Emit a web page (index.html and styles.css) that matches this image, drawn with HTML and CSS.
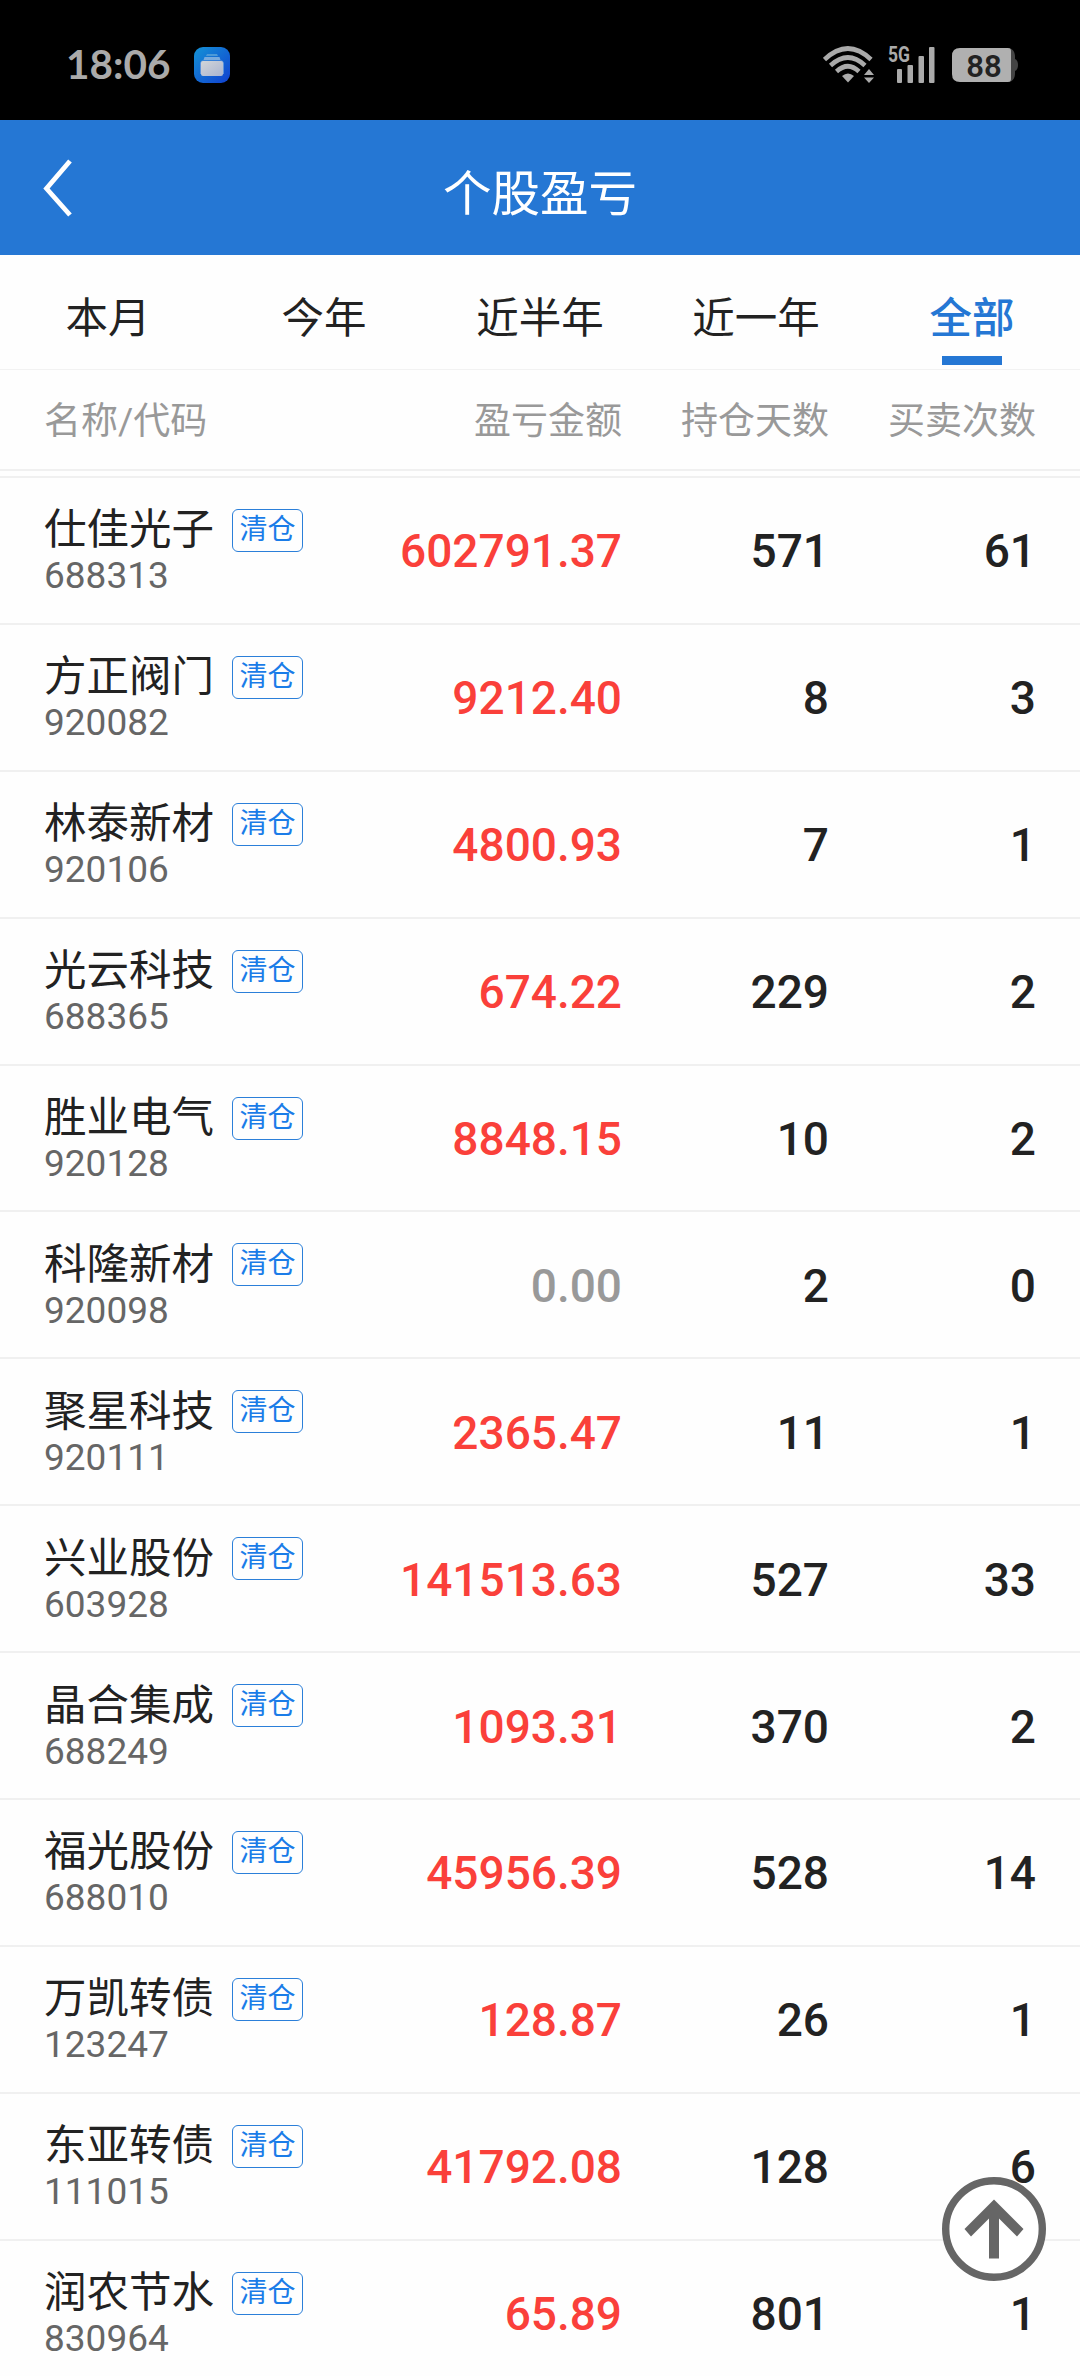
FILE: index.html
```html
<!DOCTYPE html>
<html lang="zh-CN">
<head>
    <meta charset="UTF-8">
    <meta name="viewport" content="width=device-width, initial-scale=1.0">
    <title>个股盈亏</title>
    <link rel="stylesheet" href="styles.css">
</head>
<body>
    <div class="status-bar">
        <span class="time">18:06</span>
        <svg class="app-icon" width="36" height="36" viewBox="0 0 36 36">
            <defs>
                <linearGradient id="appBg" x1="0" y1="0" x2="1" y2="1">
                    <stop offset="0" stop-color="#1593d6"/>
                    <stop offset="1" stop-color="#1040d0"/>
                </linearGradient>
                <linearGradient id="appCard" x1="0" y1="0" x2="1" y2="1">
                    <stop offset="0" stop-color="#d2d5d8"/>
                    <stop offset="1" stop-color="#a9b4d0"/>
                </linearGradient>
            </defs>
            <rect width="36" height="36" rx="9" fill="url(#appBg)"/>
            <path d="M13 7h10l1 2H12z" fill="#4c9ad8"/>
            <path d="M10.500 10h15l1 3h-17z" fill="#78aadd"/>
            <path d="M8 13.500h20l2 2V27H6V15.500z" fill="#5c93dc"/>
            <rect x="7" y="14" width="22" height="15" rx="2" fill="url(#appCard)"/>
        </svg>
        <div class="status-icons">
            <svg class="wifi" width="51" height="38" viewBox="0 0 51 38">
                <g fill="none" stroke="#aaa" stroke-width="4.600">
                    <path d="M1.500 13.500Q25 -8.500 48 13.500"/>
                    <path d="M7.500 19.500Q25 3.500 42 19.500"/>
                    <path d="M13.500 25.500Q25 15 36 25.500"/>
                </g>
                <path d="M19 30Q25 25 31 30L25 36.500z" fill="#aaa"/>
                <path d="M41 29l5-6 5 6zM41 31.500h10l-5 5.500z" fill="#aaa"/>
            </svg>
            <svg class="signal" width="49" height="54" viewBox="0 -8 49 54">
                <text x="1" y="16" textLength="22" lengthAdjust="spacingAndGlyphs">5G</text>
                <rect x="10" y="23" width="5" height="14" rx="1"/>
                <rect x="20.500" y="19" width="5.500" height="18" rx="1"/>
                <rect x="31.500" y="10" width="5.500" height="27" rx="1"/>
                <rect x="42" y="1" width="5.500" height="36" rx="1"/>
            </svg>
            <svg class="battery" width="67" height="46" viewBox="0 -6 67 46">
                <path d="M57 0c4 1 6 4 6 9v2c4 1 4 11 0 12v2c0 5-2 8-6 9z" fill="#444"/>
                <path d="M8 0h48q3 0 3 3v28q0 3-3 3H8q-8 0-8-8V8q0-8 8-8z" fill="#b0b0b0"/>
                <text x="32" y="28.500" text-anchor="middle">88</text>
            </svg>
        </div>
    </div>

    <div class="header">
        <svg class="back" width="30" height="58" viewBox="0 0 30 58">
            <path d="M28 2L4.500 29.500L28 56" fill="none" stroke="#fff" stroke-width="4.800"/>
        </svg>
        <h1>个股盈亏</h1>
    </div>

    <div class="tabs">
        <div class="tab">本月</div>
        <div class="tab">今年</div>
        <div class="tab">近半年</div>
        <div class="tab">近一年</div>
        <div class="tab active">全部</div>
    </div>

    <div class="table-head">
        <span>名称/代码</span>
        <span>盈亏金额</span>
        <span>持仓天数</span>
        <span>买卖次数</span>
    </div>

    <div class="list">
        <div class="row">
            <div class="stock"><div class="name">仕佳光子<span class="tag">清仓</span></div><div class="code">688313</div></div>
            <div class="num up">602791.37</div><div class="num">571</div><div class="num">61</div>
        </div>
        <div class="row">
            <div class="stock"><div class="name">方正阀门<span class="tag">清仓</span></div><div class="code">920082</div></div>
            <div class="num up">9212.40</div><div class="num">8</div><div class="num">3</div>
        </div>
        <div class="row">
            <div class="stock"><div class="name">林泰新材<span class="tag">清仓</span></div><div class="code">920106</div></div>
            <div class="num up">4800.93</div><div class="num">7</div><div class="num">1</div>
        </div>
        <div class="row">
            <div class="stock"><div class="name">光云科技<span class="tag">清仓</span></div><div class="code">688365</div></div>
            <div class="num up">674.22</div><div class="num">229</div><div class="num">2</div>
        </div>
        <div class="row">
            <div class="stock"><div class="name">胜业电气<span class="tag">清仓</span></div><div class="code">920128</div></div>
            <div class="num up">8848.15</div><div class="num">10</div><div class="num">2</div>
        </div>
        <div class="row">
            <div class="stock"><div class="name">科隆新材<span class="tag">清仓</span></div><div class="code">920098</div></div>
            <div class="num flat">0.00</div><div class="num">2</div><div class="num">0</div>
        </div>
        <div class="row">
            <div class="stock"><div class="name">聚星科技<span class="tag">清仓</span></div><div class="code">920111</div></div>
            <div class="num up">2365.47</div><div class="num">11</div><div class="num">1</div>
        </div>
        <div class="row">
            <div class="stock"><div class="name">兴业股份<span class="tag">清仓</span></div><div class="code">603928</div></div>
            <div class="num up">141513.63</div><div class="num">527</div><div class="num">33</div>
        </div>
        <div class="row">
            <div class="stock"><div class="name">晶合集成<span class="tag">清仓</span></div><div class="code">688249</div></div>
            <div class="num up">1093.31</div><div class="num">370</div><div class="num">2</div>
        </div>
        <div class="row">
            <div class="stock"><div class="name">福光股份<span class="tag">清仓</span></div><div class="code">688010</div></div>
            <div class="num up">45956.39</div><div class="num">528</div><div class="num">14</div>
        </div>
        <div class="row">
            <div class="stock"><div class="name">万凯转债<span class="tag">清仓</span></div><div class="code">123247</div></div>
            <div class="num up">128.87</div><div class="num">26</div><div class="num">1</div>
        </div>
        <div class="row">
            <div class="stock"><div class="name">东亚转债<span class="tag">清仓</span></div><div class="code">111015</div></div>
            <div class="num up">41792.08</div><div class="num">128</div><div class="num">6</div>
        </div>
        <div class="row">
            <div class="stock"><div class="name">润农节水<span class="tag">清仓</span></div><div class="code">830964</div></div>
            <div class="num up">65.89</div><div class="num">801</div><div class="num">1</div>
        </div>
    </div>

    <svg class="back-top" width="104" height="104" viewBox="0 0 104 104">
        <circle cx="52" cy="52" r="48.300" fill="#fff" stroke="#666" stroke-width="7.400"/>
        <path d="M52 22.500L81.500 52L75 59.500L57 41.500V81.500H47V41.500L29 59.500L22.500 52z" fill="#666"/>
    </svg>
</body>
</html>
```
FILE: styles.css
```css
* {
    margin: 0;
    padding: 0;
    box-sizing: border-box;
}

body {
    position: relative;
    height: 2376px;
    overflow: hidden;
    background: #fefefe;
    color: #222;
    font-family: Roboto, 'Noto Sans CJK SC', sans-serif;
}

.status-bar {
    display: flex;
    align-items: center;
    height: 120px;
    padding: 9px 61px 0 66px;
    background: #000;
}

.time {
    width: 128px;
    padding-bottom: 2px;
    font-family: Lato, sans-serif;
    font-size: 40.500px;
    font-weight: 700;
    line-height: 48px;
    color: #aaa;
}

.app-icon {
    display: block;
}

.status-icons {
    display: flex;
    align-items: center;
    margin-left: auto;
}

.signal {
    margin: 0 16px 0 13px;
    fill: #aaa;
}

.signal text {
    font-size: 22px;
    font-weight: 700;
}

.battery text {
    font-size: 31px;
    font-weight: 600;
    fill: #222;
}

.header {
    display: grid;
    grid-template-columns: 120px 1fr 120px;
    align-items: center;
    height: 135px;
    background: #2577d4;
    color: #fff;
}

.back {
    margin-left: 42px;
}

.header h1 {
    padding-top: 15px;
    font-size: 48.500px;
    font-weight: 400;
    line-height: 60px;
    text-align: center;
}

.tabs {
    display: grid;
    grid-template-columns: repeat(5, 1fr);
    height: 115px;
    border-bottom: 1px solid #f2f2f2;
}

.tab {
    padding-top: 34px;
    font-size: 42.500px;
    line-height: 60px;
    text-align: center;
}

.tab.active {
    color: #2577d4;
    font-weight: 500;
}

.tab.active::after {
    content: '';
    display: block;
    width: 60px;
    height: 9px;
    margin: 7px auto 0;
    background: #2577d4;
}

.table-head,
.row {
    display: grid;
    grid-template-columns: 340px 238px 207px 207px;
    padding: 0 44px;
    align-items: center;
}

.table-head {
    height: 101px;
    padding-bottom: 4px;
    border-bottom: 2px solid #f0f0f0;
    font-size: 37px;
    color: #999;
}

.table-head span + span {
    text-align: right;
}

.list {
    margin-top: 5px;
    border-top: 2px solid #f0f0f0;
}

.row {
    height: 146.9px;
    border-bottom: 2px solid #f0f0f0;
}

.stock {
    padding-top: 4px;
}

.name {
    display: flex;
    align-items: center;
    font-size: 42.500px;
    line-height: 48px;
}

.tag {
    width: 71px;
    height: 43px;
    margin-left: 18px;
    border: 1.500px solid #2b7fd9;
    border-radius: 6px;
    color: #1a7ce8;
    font-size: 28px;
    line-height: 39px;
    text-align: center;
}

.code {
    font-size: 37px;
    line-height: 44px;
    color: #666;
}

.num {
    padding-top: 2px;
    font-size: 46px;
    font-weight: 500;
    text-align: right;
}

.up {
    color: #fa403a;
}

.flat {
    color: #999;
}

.back-top {
    position: absolute;
    left: 942px;
    top: 2177px;
}
```
